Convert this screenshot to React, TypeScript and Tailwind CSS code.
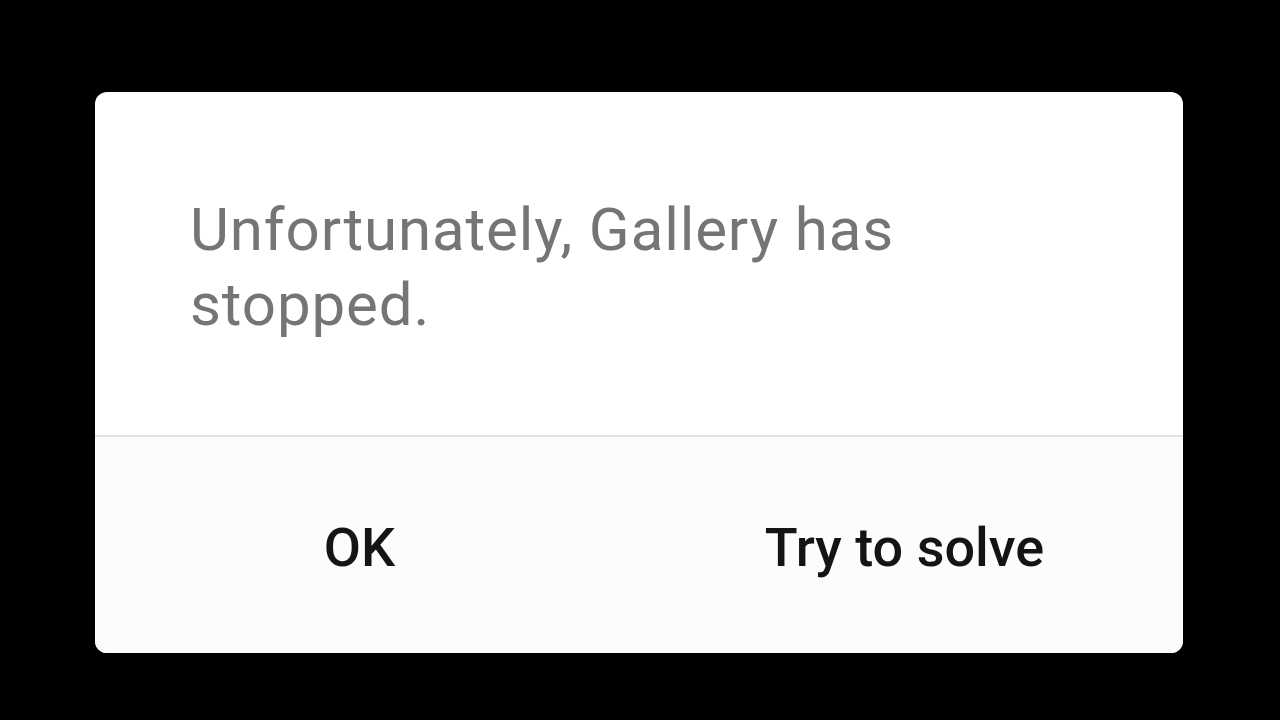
export default function App() {
  return (
    <div className="w-[1280px] h-[720px] bg-black flex items-start justify-start pt-[92px] pl-[95px]" style={{ fontFamily: 'Roboto, "Noto Sans", sans-serif' }}>
      <div className="w-[1088px] h-[561px] bg-white rounded-[12px] overflow-hidden flex flex-col">
        <div className="h-[345px] shrink-0 pl-[95px] pr-[90px] pt-[100px] border-b-2 border-[#e3e3e3]">
          <p className="text-[#757575] text-[60px] leading-[75px] tracking-[0.9px]">
            Unfortunately, Gallery has stopped.
          </p>
        </div>
        <div className="flex-1 bg-[#fcfcfc] flex pt-[4px]">
          <button className="flex-1 flex items-center justify-center pr-[16px] text-[#141414] text-[54px] font-medium">OK</button>
          <button className="flex-1 flex items-center justify-center pr-[14px] text-[#141414] text-[54px] font-medium">Try to solve</button>
        </div>
      </div>
    </div>
  );
}
